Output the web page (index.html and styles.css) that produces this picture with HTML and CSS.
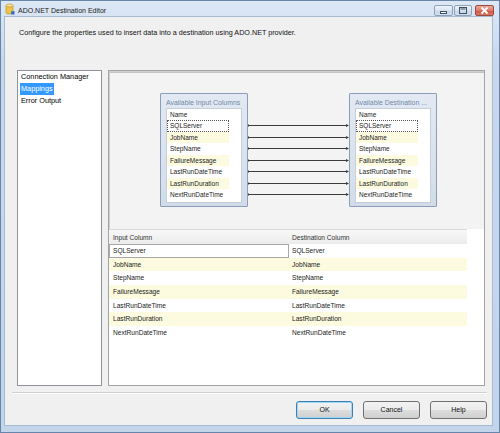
FILE: index.html
```html
<!DOCTYPE html>
<html>
<head>
<meta charset="utf-8">
<title>ADO.NET Destination Editor</title>
<link rel="stylesheet" href="styles.css">
</head>
<body>
<div class="window">
  <div class="titlebar">
    <svg class="app-icon" width="10" height="12" viewBox="0 0 10 12">
      <path d="M1 2.5 V9.5 A3.5 1.5 0 0 0 8 9.5 V2.5" fill="#f0c445" stroke="#b08a1c" stroke-width="0.6"/>
      <ellipse cx="4.5" cy="2.5" rx="3.5" ry="1.5" fill="#fbe49a" stroke="#b08a1c" stroke-width="0.6"/>
      <rect x="6.2" y="8.2" width="3.3" height="3.3" fill="#2f6bd0"/>
    </svg>
    <span class="title">ADO.NET Destination Editor</span>
    <div class="caption-btns">
      <div class="cbtn min"><svg width="19" height="11" viewBox="0 0 19 11"><rect x="6.5" y="6.5" width="6" height="2" fill="#fff" stroke="#3d4f66" stroke-width="1"/></svg></div>
      <div class="cbtn max"><svg width="18" height="11" viewBox="0 0 18 11"><rect x="5.5" y="2.5" width="7" height="6" fill="none" stroke="#3d4f66" stroke-width="1"/><rect x="6.5" y="3.5" width="5" height="1" fill="#3d4f66"/></svg></div>
      <div class="cbtn close"><svg width="19" height="11" viewBox="0 0 19 11"><path d="M6.5 2.5 L12.5 8.5 M12.5 2.5 L6.5 8.5" stroke="#fff" stroke-width="1.8"/></svg></div>
    </div>
  </div>
  <div class="client">
    <div class="desc">Configure the properties used to insert data into a destination using ADO.NET provider.</div>
    <div class="main">
      <div class="nav">
        <div class="nav-item"><span>Connection Manager</span></div>
        <div class="nav-item selected"><span>Mappings</span></div>
        <div class="nav-item"><span>Error Output</span></div>
      </div>
      <div class="panel">
        <div class="diagram">
          <svg class="links" width="375" height="158" viewBox="0 0 375 158">
            <g stroke="#3a3a3a" stroke-width="1">
              <line x1="138" y1="54.5" x2="239" y2="54.5"/>
              <line x1="138" y1="66.5" x2="239" y2="66.5"/>
              <line x1="138" y1="77.5" x2="239" y2="77.5"/>
              <line x1="138" y1="89.5" x2="239" y2="89.5"/>
              <line x1="138" y1="100.5" x2="239" y2="100.5"/>
              <line x1="138" y1="112.5" x2="239" y2="112.5"/>
              <line x1="138" y1="123.5" x2="239" y2="123.5"/>
            </g>
            <g fill="#3a3a3a">
              <polygon points="237,53 240,54.5 237,56"/>
              <polygon points="237,65 240,66.5 237,68"/>
              <polygon points="237,76 240,77.5 237,79"/>
              <polygon points="237,88 240,89.5 237,91"/>
              <polygon points="237,99 240,100.5 237,102"/>
              <polygon points="237,111 240,112.5 237,114"/>
              <polygon points="237,122 240,123.5 237,125"/>
              <rect x="138" y="53.5" width="2" height="2"/>
              <rect x="138" y="65.5" width="2" height="2"/>
              <rect x="138" y="76.5" width="2" height="2"/>
              <rect x="138" y="88.5" width="2" height="2"/>
              <rect x="138" y="99.5" width="2" height="2"/>
              <rect x="138" y="111.5" width="2" height="2"/>
              <rect x="138" y="122.5" width="2" height="2"/>
            </g>
          </svg>
          <div class="colbox src">
            <div class="colbox-title">Available Input Columns</div>
            <div class="collist">
              <div class="collist-head">Name</div>
              <div class="colrow focus">SQLServer</div>
              <div class="colrow alt">JobName</div>
              <div class="colrow">StepName</div>
              <div class="colrow alt">FailureMessage</div>
              <div class="colrow">LastRunDateTime</div>
              <div class="colrow alt">LastRunDuration</div>
              <div class="colrow">NextRunDateTime</div>
            </div>
          </div>
          <div class="colbox dst">
            <div class="colbox-title">Available Destination ...</div>
            <div class="collist">
              <div class="collist-head">Name</div>
              <div class="colrow focus">SQLServer</div>
              <div class="colrow alt">JobName</div>
              <div class="colrow">StepName</div>
              <div class="colrow alt">FailureMessage</div>
              <div class="colrow">LastRunDateTime</div>
              <div class="colrow alt">LastRunDuration</div>
              <div class="colrow">NextRunDateTime</div>
            </div>
          </div>
        </div>
        <div class="grid">
          <div class="grow head"><div class="cell c1">Input Column</div><div class="cell c2">Destination Column</div></div>
          <div class="grow"><div class="cell c1 focus">SQLServer</div><div class="cell c2">SQLServer</div></div>
          <div class="grow alt"><div class="cell c1">JobName</div><div class="cell c2">JobName</div></div>
          <div class="grow"><div class="cell c1">StepName</div><div class="cell c2">StepName</div></div>
          <div class="grow alt"><div class="cell c1">FailureMessage</div><div class="cell c2">FailureMessage</div></div>
          <div class="grow"><div class="cell c1">LastRunDateTime</div><div class="cell c2">LastRunDateTime</div></div>
          <div class="grow alt"><div class="cell c1">LastRunDuration</div><div class="cell c2">LastRunDuration</div></div>
          <div class="grow"><div class="cell c1">NextRunDateTime</div><div class="cell c2">NextRunDateTime</div></div>
        </div>
      </div>
    </div>
    <div class="sep"></div>
    <div class="buttons">
      <div class="btn default">OK</div>
      <div class="btn">Cancel</div>
      <div class="btn">Help</div>
    </div>
  </div>
</div>
</body>
</html>
```

FILE: styles.css
```css
* { box-sizing: border-box; }
html, body { margin: 0; padding: 0; }
body {
  width: 500px;
  height: 433px;
  overflow: hidden;
  font-family: "Liberation Sans", Arial, sans-serif;
  color: #000;
  background: #fff;
}
.window {
  width: 500px;
  height: 433px;
  border: 1px solid #6785ab;
  background: linear-gradient(#dde8f5, #c7d8ed 60px, #c3d5eb);
  display: flex;
  flex-direction: column;
}
.titlebar {
  height: 16px;
  flex: none;
  display: flex;
  align-items: flex-start;
  padding: 0 5px 0 4px;
}
.app-icon { margin-top: 2px; flex: none; }
.title {
  margin-left: 3px;
  margin-top: 5px;
  font-size: 7px;
  line-height: 10px;
  color: #1b1b1b;
  white-space: nowrap;
}
.caption-btns {
  margin-left: auto;
  margin-top: 4px;
  display: flex;
}
.cbtn {
  height: 11px;
  border: 1px solid #8ea2bc;
  border-radius: 2px;
  background: linear-gradient(#f1f5fa, #d9e3ef 50%, #c7d5e7 51%, #d3dfee);
  display: flex;
  align-items: center;
  justify-content: center;
  overflow: hidden;
}
.cbtn svg { flex: none; }
.cbtn.min { width: 19px; }
.cbtn.max { width: 18px; margin-left: 1px; }
.cbtn.close {
  width: 19px;
  margin-left: 3px;
  border-color: #9a4a40;
  background: linear-gradient(#eeaa9a, #dc7a68 50%, #cc5440 51%, #d87a64);
}
.client {
  flex: 1;
  margin: 0 7px 7px 4px;
  background: #f0f0f0;
  display: flex;
  flex-direction: column;
  box-shadow: 0 0 0 1px #a7bad2;
}
.desc {
  height: 53px;
  flex: none;
  padding: 11px 0 0 14px;
  font-size: 7.2px;
  line-height: 10px;
  color: #111;
  white-space: nowrap;
}
.main {
  height: 316px;
  flex: none;
  margin: 0 7px 0 12px;
  display: flex;
  gap: 6px;
}
.nav {
  width: 85px;
  flex: none;
  background: #fff;
  border: 1px solid #8f949b;
}
.nav-item {
  height: 12px;
  padding-left: 2px;
  font-size: 7.3px;
  line-height: 12px;
  white-space: nowrap;
}
.nav-item span {
  display: inline-block;
  height: 12px;
  padding: 0 1px;
}
.nav-item.selected span {
  background: #3399ff;
  color: #fff;
}
.panel {
  flex: 1;
  border: 1px solid #a3a3a3;
  display: flex;
  flex-direction: column;
  background: #fff;
}
.diagram {
  height: 158px;
  flex: none;
  position: relative;
  background: #f3f3f3;
  box-shadow: inset 1px 1px 0 #cfcfcf, inset 0 2px 0 #c4c4c4;
}
.links { position: absolute; left: 0; top: 0; }
.colbox {
  position: absolute;
  top: 22px;
  width: 88px;
  height: 114px;
  border: 1px solid #8b9db8;
  border-radius: 1px;
  background: linear-gradient(#e3e9f2, #d2dce9);
  padding: 0 5px;
}
.colbox.src { left: 51px; }
.colbox.dst { left: 240px; }
.colbox-title {
  height: 14px;
  padding: 3px 0 0 0;
  font-size: 6.9px;
  line-height: 11px;
  color: #6f88aa;
  white-space: nowrap;
  overflow: hidden;
}
.collist {
  height: 95px;
  background: #fff;
  border: 1px solid #c6d0dd;
  font-size: 6.5px;
  color: #1c1c1c;
}
.collist-head {
  height: 11px;
  line-height: 11px;
  padding-left: 3px;
}
.colrow {
  width: 62px;
  height: 11.5px;
  line-height: 11.5px;
  padding-left: 3px;
  white-space: nowrap;
}
.colrow.alt { background: #fdfbdf; }
.colrow.focus { outline: 1px dotted #555; outline-offset: -1px; }
.grid {
  flex: 1;
  background: #fff;
  font-size: 6.6px;
  color: #222;
}
.grow {
  width: 358px;
  height: 13.67px;
  display: flex;
  line-height: 13.67px;
  white-space: nowrap;
}
.grow.head {
  height: 15px;
  line-height: 15px;
  background: linear-gradient(#f8f8f8, #ececec);
  border-top: 1px solid #dadada;
  color: #333;
}
.grow.alt { background: #fdfbdf; }
.cell { padding-left: 4px; }
.cell.c1 { width: 180px; }
.cell.c2 { flex: 1; padding-left: 3px; }
.cell.focus { outline: 1px solid #a8a8a8; outline-offset: -1px; }
.sep {
  height: 2px;
  flex: none;
  margin: 6px 5px 0 7px;
  border-top: 1px solid #d0d0d0;
  border-bottom: 1px solid #fff;
}
.buttons {
  margin-top: 7px;
  display: flex;
  justify-content: flex-end;
  gap: 10px;
  padding-right: 5px;
}
.btn {
  width: 57px;
  height: 18px;
  border: 1px solid #707070;
  border-radius: 3px;
  background: linear-gradient(#f2f2f2, #ebebeb 50%, #dddddd 51%, #cfcfcf);
  font-size: 7px;
  line-height: 16px;
  text-align: center;
  color: #111;
}
.btn.default {
  border-color: #3c7fb1;
  box-shadow: inset 0 0 0 1px #9fd7f5;
}
```
